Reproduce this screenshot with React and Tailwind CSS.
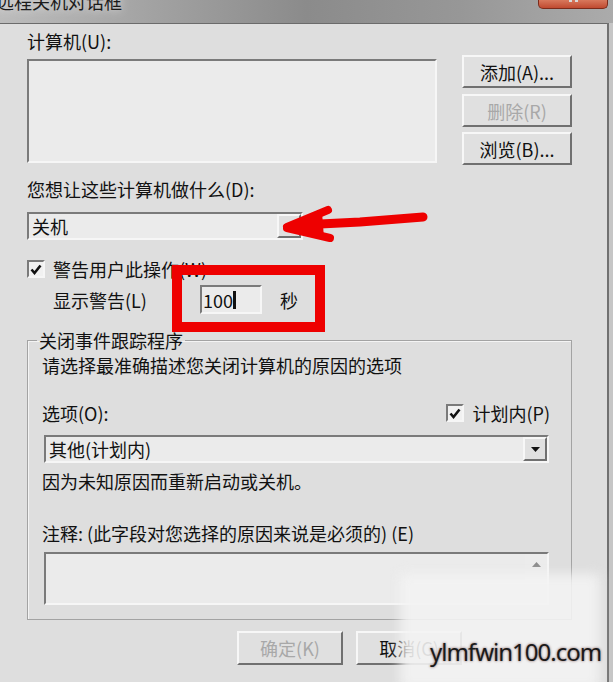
import React from "react";

const raised =
  "border-2 border-t-[#f7f7f7] border-l-[#f7f7f7] border-b-[#707070] border-r-[#707070] bg-[#e0e0e0]";
const sunken =
  "border-2 border-t-[#7a7a7a] border-l-[#7a7a7a] border-b-[#f6f6f6] border-r-[#f6f6f6]";

function DropArrow() {
  return (
    <svg width="9" height="5" viewBox="0 0 9 5">
      <polygon points="0,0 9,0 4.5,5" fill="#111" />
    </svg>
  );
}

function Check() {
  return (
    <div className={`w-[18px] h-[18px] ${sunken} bg-[#f1f1f1] flex items-center justify-center`}>
      <svg width="12" height="11" viewBox="0 0 12 11">
        <path d="M1.5 5.5 L4.5 9 L10.5 1.5" stroke="#111" strokeWidth="2.6" fill="none" />
      </svg>
    </div>
  );
}

function Combo({ className, text }) {
  return (
    <div className={`${className} h-[28px] ${sunken} bg-[#ebebeb] flex`}>
      <div className="flex-1 pl-[3px] leading-[24px]">{text}</div>
      <div className={`w-[24px] h-full ${raised} flex items-center justify-center`}>
        <DropArrow />
      </div>
    </div>
  );
}

function Btn({ children, disabled, className = "" }) {
  return (
    <div
      className={`${className} h-[33px] ${raised} flex items-center justify-center ${
        disabled ? "text-[#a8a8a8]" : "text-[#111]"
      }`}
    >
      {children}
    </div>
  );
}

export default function App() {
  return (
    <div className="relative w-[613px] h-[682px] overflow-hidden bg-[#b4b4b4] font-['Noto_Sans_CJK_SC','Noto_Sans',sans-serif] text-[18px] leading-[20px] text-[#111]">
      {/* title bar */}
      <div className="relative h-[23px] flex items-start bg-[linear-gradient(90deg,#bcbcbc_0%,#a2a2a2_25%,#8b8b8b_50%,#979797_75%,#ababab_100%)]">
        <div className="-mt-[9px] -ml-[4px] text-[#1b1b1b] [text-shadow:0_0_8px_#e8e8e8]">远程关机对话框</div>
        <div className="ml-auto mr-[5px] w-[70px] h-[9px] rounded-b-[5px] border border-t-0 border-[#7c2b1b] bg-[linear-gradient(180deg,#d8785c,#c04a30)] flex justify-center gap-[3px]">
          <div className="w-[3px] h-[2px] bg-[#d9d9d9]" />
          <div className="w-[3px] h-[2px] bg-[#d9d9d9]" />
        </div>
      </div>

      <div className="flex h-[659px]">
        <div className="w-[607px] border-t border-[#6b6b6b] bg-[#dedede] pl-[27px]">
          <div className="mt-[7px]">计算机(U):</div>
          <div className="flex mt-[4px]">
            <div className={`w-[410px] mt-[4px] h-[104px] ${sunken} bg-[#ebebeb]`} />
            <div className="ml-[25px] flex flex-col">
              <Btn className="w-[110px]">添加(A)...</Btn>
              <Btn className="w-[110px] mt-[6px]" disabled>删除(R)</Btn>
              <Btn className="w-[110px] mt-[5px]">浏览(B)...</Btn>
            </div>
          </div>

          <div className="mt-[14px]">您想让这些计算机做什么(D):</div>
          <Combo className="w-[276px] mt-[13px]" text="关机" />

          <div className="mt-[18px] h-[22px] flex items-center gap-[8px]">
            <Check />
            <span>警告用户此操作(W)</span>
          </div>
          <div className="mt-[5px] h-[29px] flex items-center pl-[26px]">
            <span className="w-[147px]">显示警告(L)</span>
            <div className={`w-[62px] h-[29px] ${sunken} bg-[#ebebeb] flex items-center pl-[1px]`}>
              <span className="leading-[20px]">100</span>
              <span className="w-[3px] h-[18px] bg-[#111]" />
            </div>
            <span className="ml-[18px]">秒</span>
          </div>

          <fieldset className="mt-[16px] w-[545px] h-[290px] border border-[#a3a3a3] shadow-[inset_1px_1px_0_#f4f4f4] px-0 pb-0">
            <legend className="ml-[9px] px-[2px]">关闭事件跟踪程序</legend>
            <div className="pl-[14px] w-[522px]">
              <div className="mt-[5px]">请选择最准确描述您关闭计算机的原因的选项</div>
              <div className="mt-[27px] h-[22px] flex items-center">
                <span>选项(O):</span>
                <div className="ml-auto flex items-center gap-[8px]">
                  <Check />
                  <span>计划内(P)</span>
                </div>
              </div>
              <Combo className="ml-[2px] w-[505px] mt-[11px]" text="其他(计划内)" />
              <div className="mt-[8px]">因为未知原因而重新启动或关机。</div>
              <div className="mt-[32px] whitespace-pre">注释: (此字段对您选择的原因来说是必须的) (E)</div>
              <div className={`ml-[2px] w-[505px] h-[53px] mt-[9px] ${sunken} bg-[#ebebeb] flex justify-end`}>
                <div className="w-[22px] h-full bg-[#ececec] flex justify-center pt-[8px]">
                  <svg width="9" height="5" viewBox="0 0 9 5">
                    <polygon points="4.5,0 9,5 0,5" fill="#8a8a8a" />
                  </svg>
                </div>
              </div>
            </div>
          </fieldset>

          <div className="mt-[11px] flex pl-[210px] gap-[13px]">
            <Btn className="w-[106px] h-[34px]" disabled>确定(K)</Btn>
            <Btn className="w-[106px] h-[34px]">取消(C)</Btn>
          </div>
        </div>
        <div className="w-[2px] bg-[#717171]" />
        <div className="flex-1 bg-[#c6c6c6]" />
      </div>

      {/* annotations */}
      <svg className="absolute left-0 top-0" width="613" height="682">
        <path d="M300 225 L360 222 L423 217" stroke="#ee0000" strokeWidth="9" strokeLinecap="round" fill="none" />
        <polygon points="285,228 322,212 324,238" fill="#ee0000" />
        <path d="M287 227 L328 210 M287 228 L330 238" stroke="#ee0000" strokeWidth="8" strokeLinecap="round" fill="none" />
      </svg>
      <div className="absolute left-[172px] top-[265px] w-[153px] h-[67px] border-[10px] border-[#ee0000]" />

      {/* watermark */}
      <div className="absolute left-[400px] top-[574px] w-[200px] h-[115px] bg-[#f3f3f3]/90 blur-[6px]" />
      <div className="absolute left-[430px] top-[637px] font-['Noto_Sans',sans-serif] text-[24px] leading-[30px] tracking-[-1px] text-[#1a1a1a] [text-shadow:0_0_2px_#a89292,0_0_3px_#a89292]">
        ylmfwin100.com
      </div>
    </div>
  );
}
